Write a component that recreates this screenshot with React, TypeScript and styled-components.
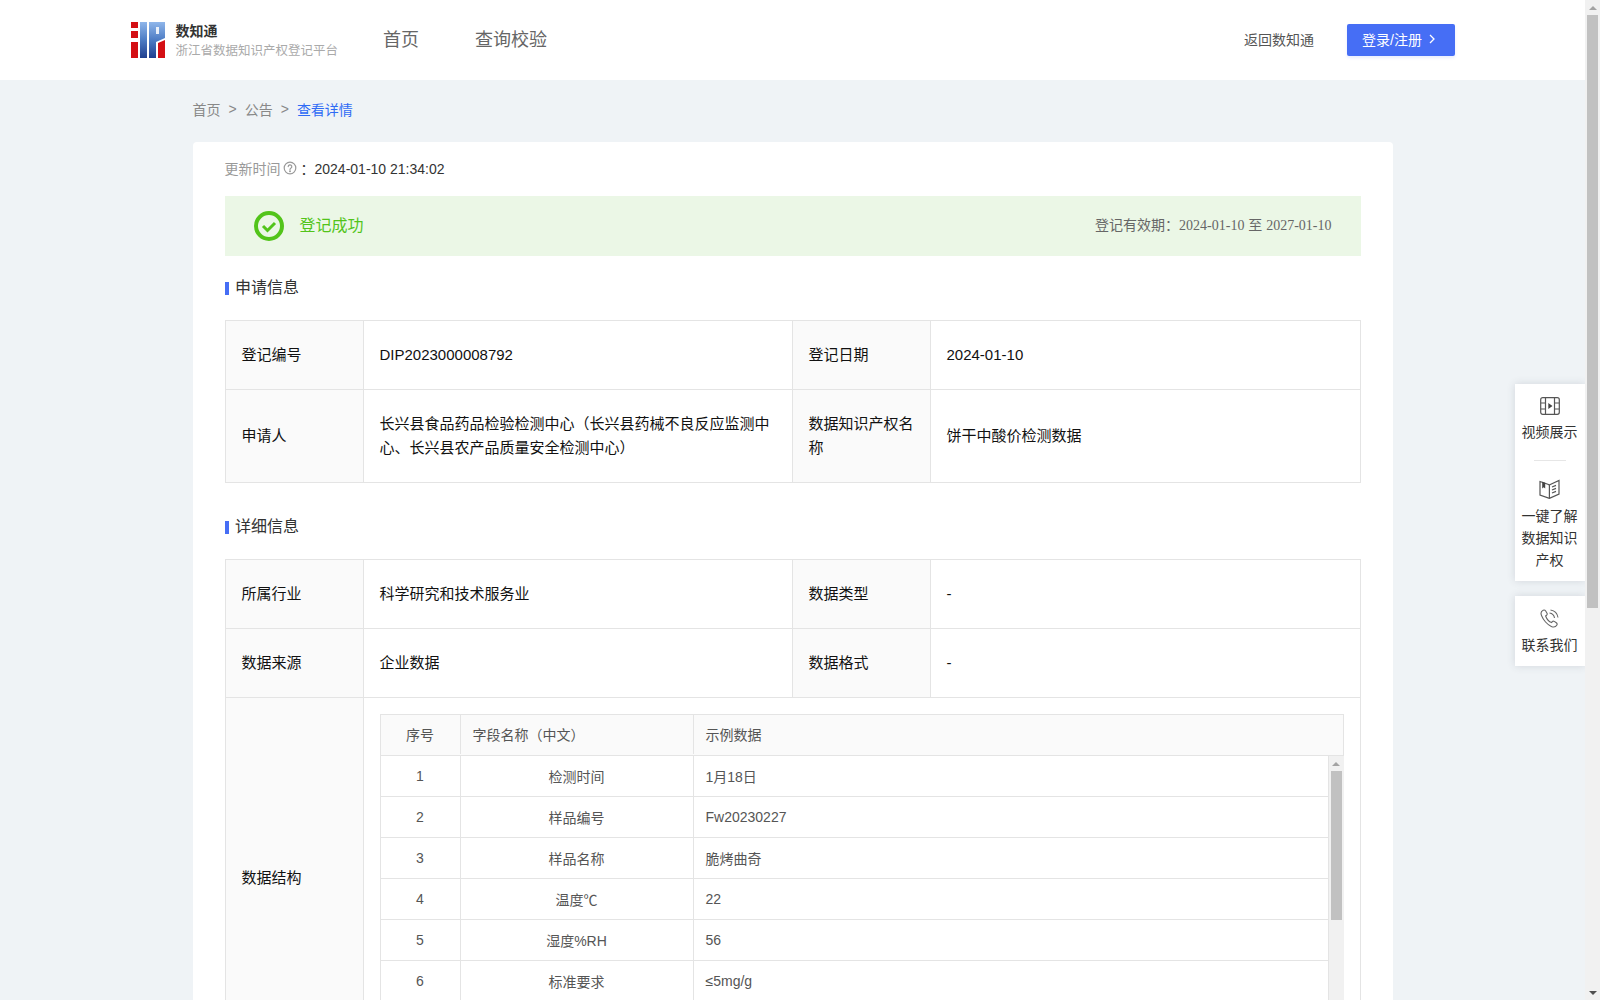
import React from "react";
import styled, { createGlobalStyle } from "styled-components";

const Global = createGlobalStyle`
  html, body { margin: 0; padding: 0; height: 100%; overflow: hidden; }
  body { font-family: "Liberation Sans", "Noto Sans CJK SC", sans-serif; background: #eff3f6; }
  * { box-sizing: border-box; }
`;

const Shell = styled.div`
  display: flex;
  height: 1000px;
  overflow: hidden;
`;
const Page = styled.div`
  flex: 1;
  min-width: 0;
  overflow: hidden;
  background: #eff3f6;
  position: relative;
`;

/* page scrollbar */
const Track = styled.div<{ $w: number }>`
  flex: none;
  width: ${(p) => p.$w}px;
  background: #f1f1f1;
  display: flex;
  flex-direction: column;
  align-items: center;
`;
const ArrowBox = styled.div<{ $end?: boolean }>`
  flex: none;
  height: 15px;
  width: 100%;
  display: flex;
  align-items: center;
  justify-content: center;
  margin-top: ${(p) => (p.$end ? "auto" : "0")};
`;
const ArrowUp = styled.div`
  width: 0;
  height: 0;
  border-left: 4px solid transparent;
  border-right: 4px solid transparent;
  border-bottom: 4px solid #a3a3a3;
`;
const ArrowDown = styled.div`
  width: 0;
  height: 0;
  border-left: 4px solid transparent;
  border-right: 4px solid transparent;
  border-top: 4px solid #505050;
`;
const Thumb = styled.div<{ $h: number }>`
  flex: none;
  width: 11px;
  height: ${(p) => p.$h}px;
  background: #c1c1c1;
`;

/* header */
const Header = styled.header`
  height: 80px;
  background: #fff;
  display: flex;
  align-items: center;
  padding: 0 130px 0 131px;
`;
const Brand = styled.div`
  display: flex;
  align-items: center;
  width: 252px;
`;
const BrandText = styled.div`
  margin-left: 10.5px;
  display: flex;
  flex-direction: column;
`;
const BrandName = styled.div`
  font-size: 14px;
  line-height: 20px;
  font-weight: 700;
  color: #333;
`;
const BrandSub = styled.div`
  margin-top: 1px;
  font-size: 12.5px;
  line-height: 18px;
  color: #aaa;
  white-space: nowrap;
`;
const Nav = styled.nav`
  display: flex;
  gap: 56px;
  margin-bottom: 4px;
`;
const NavItem = styled.a`
  font-size: 18px;
  color: #666;
`;
const HeaderRight = styled.div`
  margin-left: auto;
  display: flex;
  align-items: center;
  gap: 33px;
`;
const BackLink = styled.a`
  font-size: 14px;
  color: #555;
  margin-bottom: 3px;
`;
const LoginBtn = styled.button`
  width: 108px;
  height: 32px;
  border: 0;
  border-radius: 2px;
  background: #466ef5;
  color: #fff;
  font: inherit;
  font-size: 14px;
  display: flex;
  align-items: center;
  justify-content: center;
  gap: 7px;
  padding: 0 5px 3px 0;
  box-shadow: 0 2px 3px rgba(70, 110, 245, 0.12);
`;

/* content */
const Crumbs = styled.div`
  width: 1200px;
  margin: 0 auto;
  height: 62px;
  padding-bottom: 4px;
  display: flex;
  align-items: center;
  font-size: 14px;
  color: #888;
`;
const Sep = styled.span`
  margin: 0 8px;
`;
const CrumbNow = styled.span`
  color: #2f6bf5;
`;
const Card = styled.main`
  width: 1200px;
  margin: 0 auto;
  background: #fff;
  border-radius: 4px;
  padding: 16px 32px 40px;
`;
const UpdateRow = styled.div`
  display: flex;
  align-items: center;
  height: 22px;
  padding-bottom: 2px;
  font-size: 14px;
  color: #333;
`;
const UpdateLabel = styled.span`
  color: #999;
  display: inline-flex;
  align-items: center;
  gap: 2px;
  margin-right: 4px;
`;
const StatusBar = styled.div`
  margin-top: 16px;
  height: 60px;
  background: #ebf7e6;
  display: flex;
  align-items: center;
  padding: 0 29px;
`;
const StatusText = styled.span`
  margin: 0 0 5px 16px;
  font-size: 16px;
  color: #52c41a;
`;
const Validity = styled.span`
  margin: 0 0 5px auto;
  font-size: 14px;
  color: #666;
`;
const SerifDate = styled.span`
  font-family: "Liberation Serif", "Noto Sans CJK SC", serif;
`;
const SectionTitle = styled.h2<{ $top: number }>`
  margin: ${(p) => p.$top}px 0 23px;
  height: 20px;
  padding-bottom: 2px;
  display: flex;
  align-items: center;
  gap: 6.5px;
  font-size: 16px;
  font-weight: 400;
  color: #333;
  &::before {
    content: "";
    width: 4px;
    height: 13px;
    margin-top: 5px;
    background: #466ef5;
  }
`;
const InfoTable = styled.table`
  width: 1135px;
  table-layout: fixed;
  border-collapse: collapse;
  font-size: 15px;
  color: #111;
`;
const LabelCell = styled.td`
  border: 1px solid #e4e4e4;
  background: #fafafa;
  padding: 0 16px;
  line-height: 24px;
  color: #111;
`;
const ValueCell = styled.td<{ $h?: number }>`
  border: 1px solid #e4e4e4;
  padding: 0 16px;
  line-height: 24px;
  height: ${(p) => p.$h ?? 69}px;
  color: #111;
`;
const StructCell = styled.td`
  border: 1px solid #e4e4e4;
  padding: 16px 16px;
  vertical-align: top;
  height: 359px;
`;

/* nested table */
const Nested = styled.div`
  width: 964px;
  font-size: 14px;
  color: #555;
`;
const HeadGrid = styled.div`
  display: grid;
  grid-template-columns: 80px 233px 1fr;
  height: 42px;
  padding-bottom: 1px;
  background: #fafafa;
  border: 1px solid #e4e4e4;
  align-items: stretch;
`;
const Cell = styled.div<{ $center?: boolean; $line?: boolean }>`
  display: flex;
  align-items: center;
  justify-content: ${(p) => (p.$center ? "center" : "flex-start")};
  padding: ${(p) => (p.$center ? "0 0 1px" : "0 11px 1px 12px")};
  border-right: ${(p) => (p.$line ? "1px solid #e4e4e4" : "0")};
`;
const NestedBody = styled.div`
  display: flex;
  height: 285px;
`;
const Rows = styled.div`
  flex: 1;
  min-width: 0;
`;
const RowGrid = styled.div`
  display: grid;
  grid-template-columns: 80px 233px 1fr;
  height: 41px;
  border: 1px solid #e4e4e4;
  border-top: 0;
`;
const InnerTrack = styled.div`
  flex: none;
  width: 15px;
  background: #f1f1f1;
  display: flex;
  flex-direction: column;
  align-items: center;
`;

/* floating side panel */
const Side = styled.aside`
  position: absolute;
  right: 0;
  top: 384px;
  width: 70px;
  display: flex;
  flex-direction: column;
  gap: 15px;
`;
const SideCard = styled.div`
  background: #fff;
  box-shadow: 0 0 8px rgba(60, 70, 90, 0.16);
  padding: 13px 0 10px;
  display: flex;
  flex-direction: column;
  align-items: center;
`;
const SideItem = styled.div`
  display: flex;
  flex-direction: column;
  align-items: center;
  text-align: center;
  font-size: 14px;
  line-height: 22px;
  color: #333;
  gap: 6px;
  padding-right: 1px;
`;
const SideDivider = styled.div`
  width: 32px;
  height: 1px;
  background: #e6e6e6;
  margin: 17px 0 18px;
`;

const Logo = () => (
  <svg width="34" height="36" viewBox="0 0 34 36">
    <defs>
      <linearGradient id="lg" x1="0" y1="0" x2="0" y2="1">
        <stop offset="0" stopColor="#8fb6ea" />
        <stop offset="0.5" stopColor="#4d7cc4" />
        <stop offset="1" stopColor="#1f3f8f" />
      </linearGradient>
    </defs>
    <rect x="0" y="0" width="7" height="6" fill="#d40f14" />
    <rect x="0" y="9" width="7" height="7" fill="#d40f14" />
    <rect x="0" y="20" width="7" height="16" fill="#d40f14" />
    <rect x="9" y="0" width="7" height="36" fill="url(#lg)" />
    <path d="M18 0h16v16l-9 4v16h-7z" fill="url(#lg)" />
    <rect x="25" y="5" width="3" height="7" fill="#fff" opacity="0.85" />
    <path d="M27 21l7-3v18h-7z" fill="#d40f14" />
  </svg>
);

const QuestionIcon = () => (
  <svg width="14" height="14" viewBox="0 0 14 14" fill="none" stroke="#999" strokeWidth="1.2">
    <circle cx="7" cy="7" r="5.8" />
    <path d="M5.2 5.6a1.8 1.8 0 1 1 2.6 1.6c-.6.3-.8.6-.8 1.2" strokeLinecap="round" />
    <circle cx="7" cy="10.2" r=".4" fill="#999" />
  </svg>
);
const CheckIcon = () => (
  <svg width="30" height="30" viewBox="0 0 30 30" fill="none" stroke="#52c41a">
    <circle cx="15" cy="15" r="13" strokeWidth="4" />
    <path d="M9 15l4.5 4.5L21 12" strokeWidth="3" />
  </svg>
);
const Chevron = () => (
  <svg width="6" height="10" viewBox="0 0 6 10" fill="none" stroke="#fff" strokeWidth="1.3">
    <path d="M1 1l4 4-4 4" />
  </svg>
);
const FilmIcon = () => (
  <svg width="20" height="18" viewBox="0 0 20 18" fill="none" stroke="#555" strokeWidth="1.2">
    <rect x=".7" y=".7" width="18.6" height="16.6" rx="2" />
    <path d="M5.5 1v16M14.5 1v16M1 6h4.5M1 12h4.5M14.5 6H19M14.5 12H19" />
    <path d="M8.3 6v6l4.2-3z" fill="#444" stroke="none" />
  </svg>
);
const BookIcon = () => (
  <svg width="21" height="20" viewBox="0 0 21 20" fill="none" stroke="#555" strokeWidth="1.2">
    <path d="M1 2.5l8.5 3 .9.6.9-.6L20 1.5v13.5l-9.6 4.4L1 16z" />
    <path d="M10.4 6v13" />
    <path d="M3.2 2.8l3 1v5.6l-1.5-1.2-1.5 1.2z" fill="#444" stroke="none" />
    <path d="M13 8l4-1.6M13 11l4-1.6M13 14l4-1.6" />
  </svg>
);
const PhoneIcon = () => (
  <svg width="19" height="19" viewBox="0 0 19 19" fill="none" stroke="#666" strokeWidth="1.1">
    <path d="M3.2 1.2c-2.2 1-2.7 3-1.6 5.6 1.6 4 5.7 9 9.7 10.6 2.4 1 4.5.5 5.6-1.4.5-.9.2-1.6-.6-2.2l-2-1.4c-.8-.5-1.5-.4-2 .3l-.7.9c-2.5-.9-5-4-6-6.6l1-.8c.7-.5.8-1.2.4-2L5.7 2C5 1 4.2.8 3.2 1.2z" />
    <path d="M9.5 4a6 6 0 0 1 5 5M10.5 1a9 9 0 0 1 7.5 7.5" />
  </svg>
);

const rows: [string, string, string][] = [
  ["1", "检测时间", "1月18日"],
  ["2", "样品编号", "Fw20230227"],
  ["3", "样品名称", "脆烤曲奇"],
  ["4", "温度℃", "22"],
  ["5", "湿度%RH", "56"],
  ["6", "标准要求", "≤5mg/g"],
];

const Cols = () => (
  <colgroup>
    <col width="138" />
    <col width="429" />
    <col width="138" />
    <col width="430" />
  </colgroup>
);

export default function App() {
  return (
    <Shell>
      <Global />
      <Page>
        <Header>
          <Brand>
            <Logo />
            <BrandText>
              <BrandName>数知通</BrandName>
              <BrandSub>浙江省数据知识产权登记平台</BrandSub>
            </BrandText>
          </Brand>
          <Nav>
            <NavItem>首页</NavItem>
            <NavItem>查询校验</NavItem>
          </Nav>
          <HeaderRight>
            <BackLink>返回数知通</BackLink>
            <LoginBtn>
              登录/注册 <Chevron />
            </LoginBtn>
          </HeaderRight>
        </Header>
        <Crumbs>
          首页<Sep>&gt;</Sep>公告<Sep>&gt;</Sep>
          <CrumbNow>查看详情</CrumbNow>
        </Crumbs>
        <Card>
          <UpdateRow>
            <UpdateLabel>
              更新时间
              <QuestionIcon />
            </UpdateLabel>
            ：2024-01-10 21:34:02
          </UpdateRow>
          <StatusBar>
            <CheckIcon />
            <StatusText>登记成功</StatusText>
            <Validity>
              登记有效期：<SerifDate>2024-01-10</SerifDate> 至 <SerifDate>2027-01-10</SerifDate>
            </Validity>
          </StatusBar>
          <SectionTitle $top={21}>申请信息</SectionTitle>
          <InfoTable>
            <Cols />
            <tbody>
              <tr>
                <LabelCell>登记编号</LabelCell>
                <ValueCell>DIP2023000008792</ValueCell>
                <LabelCell>登记日期</LabelCell>
                <ValueCell>2024-01-10</ValueCell>
              </tr>
              <tr>
                <LabelCell>申请人</LabelCell>
                <ValueCell $h={93}>长兴县食品药品检验检测中心（长兴县药械不良反应监测中心、长兴县农产品质量安全检测中心）</ValueCell>
                <LabelCell>数据知识产权名称</LabelCell>
                <ValueCell $h={93}>饼干中酸价检测数据</ValueCell>
              </tr>
            </tbody>
          </InfoTable>
          <SectionTitle $top={33}>详细信息</SectionTitle>
          <InfoTable>
            <Cols />
            <tbody>
              <tr>
                <LabelCell>所属行业</LabelCell>
                <ValueCell>科学研究和技术服务业</ValueCell>
                <LabelCell>数据类型</LabelCell>
                <ValueCell>-</ValueCell>
              </tr>
              <tr>
                <LabelCell>数据来源</LabelCell>
                <ValueCell>企业数据</ValueCell>
                <LabelCell>数据格式</LabelCell>
                <ValueCell>-</ValueCell>
              </tr>
              <tr>
                <LabelCell>数据结构</LabelCell>
                <StructCell colSpan={3}>
                  <Nested>
                    <HeadGrid>
                      <Cell $center $line>序号</Cell>
                      <Cell $line>字段名称（中文）</Cell>
                      <Cell>示例数据</Cell>
                    </HeadGrid>
                    <NestedBody>
                      <Rows>
                        {rows.map(([n, name, v]) => (
                          <RowGrid key={n}>
                            <Cell $center $line>{n}</Cell>
                            <Cell $center $line>{name}</Cell>
                            <Cell>{v}</Cell>
                          </RowGrid>
                        ))}
                      </Rows>
                      <InnerTrack>
                        <ArrowBox>
                          <ArrowUp />
                        </ArrowBox>
                        <Thumb $h={149} />
                      </InnerTrack>
                    </NestedBody>
                  </Nested>
                </StructCell>
              </tr>
            </tbody>
          </InfoTable>
        </Card>
        <Side>
          <SideCard>
            <SideItem>
              <FilmIcon />
              视频展示
            </SideItem>
            <SideDivider />
            <SideItem>
              <BookIcon />
              <div>一键了解<br />数据知识<br />产权</div>
            </SideItem>
          </SideCard>
          <SideCard>
            <SideItem>
              <PhoneIcon />
              联系我们
            </SideItem>
          </SideCard>
        </Side>
      </Page>
      <Track $w={15}>
        <ArrowBox>
          <ArrowUp />
        </ArrowBox>
        <Thumb $h={593} />
        <ArrowBox $end>
          <ArrowDown />
        </ArrowBox>
      </Track>
    </Shell>
  );
}
